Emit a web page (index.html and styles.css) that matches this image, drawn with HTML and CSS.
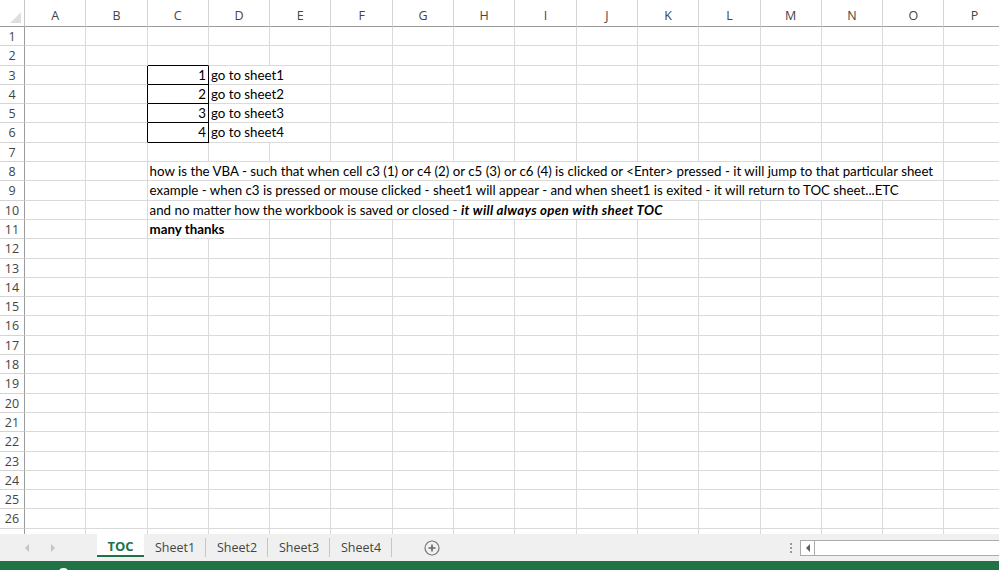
FILE: index.html
```html
<!DOCTYPE html>
<html lang="en">
<head>
    <meta charset="UTF-8">
    <title>TOC - Book1 - Excel</title>
    <link rel="stylesheet" href="styles.css">
</head>
<body>
    <div class="app">
        <div class="sheet" id="sheet"></div>

        <!-- Sheet tabs -->
        <div class="tab-bar">
            <div class="tab-nav">
                <span class="arrow arrow-left"></span>
                <span class="arrow arrow-right"></span>
            </div>
            <div class="tabs">
                <div class="tab active">TOC</div>
                <div class="tab">Sheet1</div>
                <div class="tab">Sheet2</div>
                <div class="tab">Sheet3</div>
                <div class="tab">Sheet4</div>
                <div class="add-sheet">
                    <svg width="16" height="16" viewBox="0 0 16 16">
                        <circle cx="8" cy="8" r="7" fill="none" stroke="#777" stroke-width="1.2"/>
                        <path d="M8 4.5v7M4.5 8h7" stroke="#666" stroke-width="1.6"/>
                    </svg>
                </div>
            </div>
            <div class="splitter">
                <span></span><span></span><span></span>
            </div>
            <div class="hscroll">
                <div class="scroll-btn"><span class="mini-arrow"></span></div>
                <div class="scroll-track"></div>
            </div>
        </div>

        <!-- Status bar -->
        <div class="status-bar">
            <span class="status-text">READY</span>
            <span class="macro-icon"></span>
        </div>
    </div>

    <script src="script.js"></script>
</body>
</html>
```

FILE: styles.css
```css
html, body {
    margin: 0;
    padding: 0;
    height: 570px;
    overflow: hidden;
    background: #fff;
}

.app {
    width: 999px;
    height: 570px;
    display: flex;
    flex-direction: column;
    overflow: hidden;
}

/* Grid */
.sheet {
    height: 534px;
    flex: none;
    overflow: hidden;
    display: grid;
    grid-template-columns: 25px repeat(16, 61.3px);
    grid-template-rows: 27px;
    grid-auto-rows: 19.3px;
    font-family: Lato, 'Noto Sans', sans-serif;
    font-size: 13.3px;
    color: #000;
}

.cell {
    box-sizing: border-box;
    border-right: 1px solid #dadada;
    border-bottom: 1px solid #dadada;
    white-space: nowrap;
    overflow: visible;
    line-height: 19px;
    padding: 0 2px;
}

.cell.num {
    text-align: right;
}

.cell.bold {
    font-weight: bold;
}

.cell .em {
    font-weight: bold;
    font-style: italic;
    letter-spacing: 0.3px;
}

.cell.box {
    border-right-color: #000;
    border-bottom-color: #000;
}

.cell.box-left {
    border-right-color: #000;
}

.cell.box-top {
    border-bottom-color: #000;
}

.col-head,
.row-head,
.corner {
    box-sizing: border-box;
    font-family: 'Open Sans', 'Noto Sans', sans-serif;
    font-size: 12.5px;
    color: #444;
    background: #fff;
}

.corner {
    border-right: 1px solid #c6c6c6;
    border-bottom: 1px solid #9b9b9b;
    position: relative;
}

.corner::after {
    content: '';
    position: absolute;
    right: 3px;
    bottom: 3px;
    border-left: 11px solid transparent;
    border-bottom: 11px solid #dfdfdf;
}

.col-head {
    display: flex;
    align-items: flex-end;
    justify-content: center;
    padding-bottom: 2px;
    border-right: 1px solid #d4d4d4;
    border-bottom: 1px solid #9b9b9b;
}

.row-head {
    text-align: center;
    line-height: 20px;
    border-right: 1px solid #9b9b9b;
    border-bottom: 1px solid #d4d4d4;
}

/* Tabs */
.tab-bar {
    height: 27px;
    flex: none;
    display: flex;
    align-items: stretch;
    background: #f0f0f0;
    font-family: 'Open Sans', 'Noto Sans', sans-serif;
    font-size: 12.5px;
    color: #444;
}

.tab-nav {
    width: 97px;
    display: flex;
    align-items: center;
    padding-left: 25px;
    gap: 22px;
    box-sizing: border-box;
}

.arrow {
    width: 0;
    height: 0;
    border-top: 4px solid transparent;
    border-bottom: 4px solid transparent;
}

.arrow-left {
    border-right: 4px solid #c4c4c4;
}

.arrow-right {
    border-left: 4px solid #c4c4c4;
}

.tabs {
    display: flex;
    align-items: stretch;
}

.tab {
    width: 62px;
    display: flex;
    align-items: center;
    justify-content: center;
    position: relative;
    box-sizing: border-box;
    padding-bottom: 1px;
}

.tab::after {
    content: '';
    position: absolute;
    right: 0;
    top: 4px;
    bottom: 4px;
    border-right: 1px solid #c6c6c6;
}

.tab.active {
    width: 47px;
    background: #fff;
    color: #217346;
    font-weight: bold;
    font-size: 13px;
    border-bottom: 2px solid #217346;
    margin-bottom: 4px;
    padding-bottom: 0;
    padding-top: 3px;
}

.tab.active::after {
    display: none;
}

.add-sheet {
    width: 80px;
    display: flex;
    align-items: center;
    justify-content: center;
}

.splitter {
    margin-left: auto;
    width: 14px;
    display: flex;
    flex-direction: column;
    justify-content: center;
    align-items: center;
    gap: 2px;
    margin-right: 2px;
}

.splitter span {
    width: 2px;
    height: 2px;
    background: #999;
}

.hscroll {
    width: 198px;
    display: flex;
    align-items: stretch;
    margin: 6px 0 5px 0;
    border: 1px solid #ababab;
    border-right: none;
    background: #fff;
}

.scroll-btn {
    width: 13px;
    border-right: 1px solid #ababab;
    display: flex;
    align-items: center;
    justify-content: center;
}

.mini-arrow {
    width: 0;
    height: 0;
    border-top: 4px solid transparent;
    border-bottom: 4px solid transparent;
    border-right: 4px solid #606060;
}

.scroll-track {
    flex: 1;
}

/* Status bar */
.status-bar {
    height: 22px;
    flex: none;
    background: #217346;
    display: flex;
    align-items: flex-start;
    padding: 6px 0 0 6px;
    gap: 22px;
    box-sizing: border-box;
    font-family: 'Open Sans', 'Noto Sans', sans-serif;
    font-size: 10px;
    line-height: 14px;
    color: #fff;
}

.macro-icon {
    width: 9px;
    height: 9px;
    margin-top: 1px;
    border: 2px solid #fff;
    border-radius: 4px 4px 0 0;
    box-sizing: border-box;
}
```

FILE: script.js
```js
const columns = 'ABCDEFGHIJKLMNOP'.split('');
const rowCount = 27;

// cell contents, keyed by address
const cells = {
    C2: { cls: 'box-top' },
    B3: { cls: 'box-left' }, B4: { cls: 'box-left' }, B5: { cls: 'box-left' }, B6: { cls: 'box-left' },
    C3: { text: '1', cls: 'num box' },
    C4: { text: '2', cls: 'num box' },
    C5: { text: '3', cls: 'num box' },
    C6: { text: '4', cls: 'num box' },
    D3: { text: 'go to sheet1', span: 2 },
    D4: { text: 'go to sheet2', span: 2 },
    D5: { text: 'go to sheet3', span: 2 },
    D6: { text: 'go to sheet4', span: 2 },
    C8: { text: 'how is the VBA - such that when cell c3 (1) or c4 (2) or c5 (3) or c6 (4) is clicked or &lt;Enter&gt; pressed - it will jump to that particular sheet', span: 13 },
    C9: { text: 'example - when c3 is pressed or mouse clicked - sheet1 will appear - and when sheet1 is exited - it will return to TOC sheet...ETC', span: 13 },
    C10: { text: 'and no matter how the workbook is saved or closed - <span class="em">it will always open with sheet TOC</span>', span: 9 },
    C11: { text: 'many thanks', cls: 'bold', span: 2 }
};

const sheet = document.getElementById('sheet');
let html = '<div class="corner"></div>';

columns.forEach(c => {
    html += '<div class="col-head">' + c + '</div>';
});

for (let r = 1; r <= rowCount; r++) {
    html += '<div class="row-head">' + r + '</div>';
    let skip = 0;
    columns.forEach(c => {
        if (skip > 0) { skip--; return; }
        const data = cells[c + r] || {};
        const span = data.span || 1;
        skip = span - 1;
        const style = span > 1 ? ' style="grid-column: span ' + span + '"' : '';
        html += '<div class="cell ' + (data.cls || '') + '"' + style + '>' + (data.text || '') + '</div>';
    });
}

sheet.innerHTML = html;
```
